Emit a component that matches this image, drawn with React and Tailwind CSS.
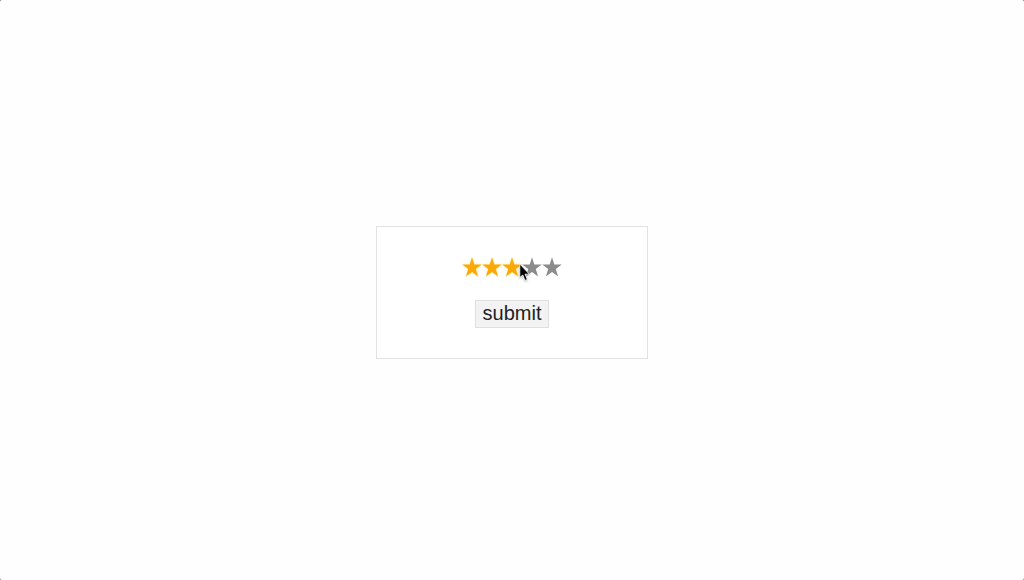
import { useState } from "react";

const STARS = [1, 2, 3, 4, 5];

function Star({ active }) {
  return (
    <svg
      viewBox="0 0 20 20"
      className={
        active
          ? "w-5 h-5 text-[#fba90a] drop-shadow-[0_0_1px_#ffec8a]"
          : "w-5 h-5 text-[#8b8b8b]"
      }
      aria-hidden="true"
    >
      <path
        d="M10 0.3 L12.3 7.4 H19.8 L13.8 12 L16.1 19.5 L10 14.9 L3.9 19.5 L6.2 12 L0.2 7.4 H7.7 Z"
        fill="currentColor"
      />
    </svg>
  );
}

function Pointer() {
  return (
    <svg
      viewBox="0 0 14 20"
      className="absolute left-[57px] top-[6px] w-[14px] h-5 pointer-events-none drop-shadow-[0_1px_1px_rgba(0,0,0,0.25)]"
      aria-hidden="true"
    >
      <path
        d="M0.8 1 V14.6 L3.8 12 L6 17.4 L8.3 16.4 L6.1 11.2 H10.4 Z"
        fill="#000"
        stroke="#fff"
        strokeWidth="0.8"
      />
    </svg>
  );
}

export default function App() {
  const [rating, setRating] = useState(3);

  const handleSubmit = (e) => {
    e.preventDefault();
  };

  return (
    <div className="min-h-screen bg-[#777777]">
      <main className="min-h-screen flex items-center justify-center pt-[5px] rounded-[2px] bg-[#fefefe] font-['Liberation_Sans',Arial,sans-serif]">
        <form
          onSubmit={handleSubmit}
          className="flex flex-col items-center gap-[23px] px-[85px] py-[30px] border border-[#e2e2e2] bg-white"
        >
          {/* Rating */}
          <div className="relative flex" role="radiogroup" aria-label="Rating">
            {STARS.map((value) => (
              <label key={value} className="block cursor-pointer">
                <input
                  type="radio"
                  name="rating"
                  value={value}
                  checked={rating === value}
                  onChange={() => setRating(value)}
                  aria-label={`${value} stars`}
                  className="sr-only"
                />
                <Star active={value <= rating} />
              </label>
            ))}
            <Pointer />
          </div>

          {/* Submit */}
          <button
            type="submit"
            className="px-[7px] pb-[2px] text-xl leading-6 text-[#222222] bg-[#f3f3f3] border border-[#dfdfdf]"
          >
            submit
          </button>
        </form>
      </main>
    </div>
  );
}
